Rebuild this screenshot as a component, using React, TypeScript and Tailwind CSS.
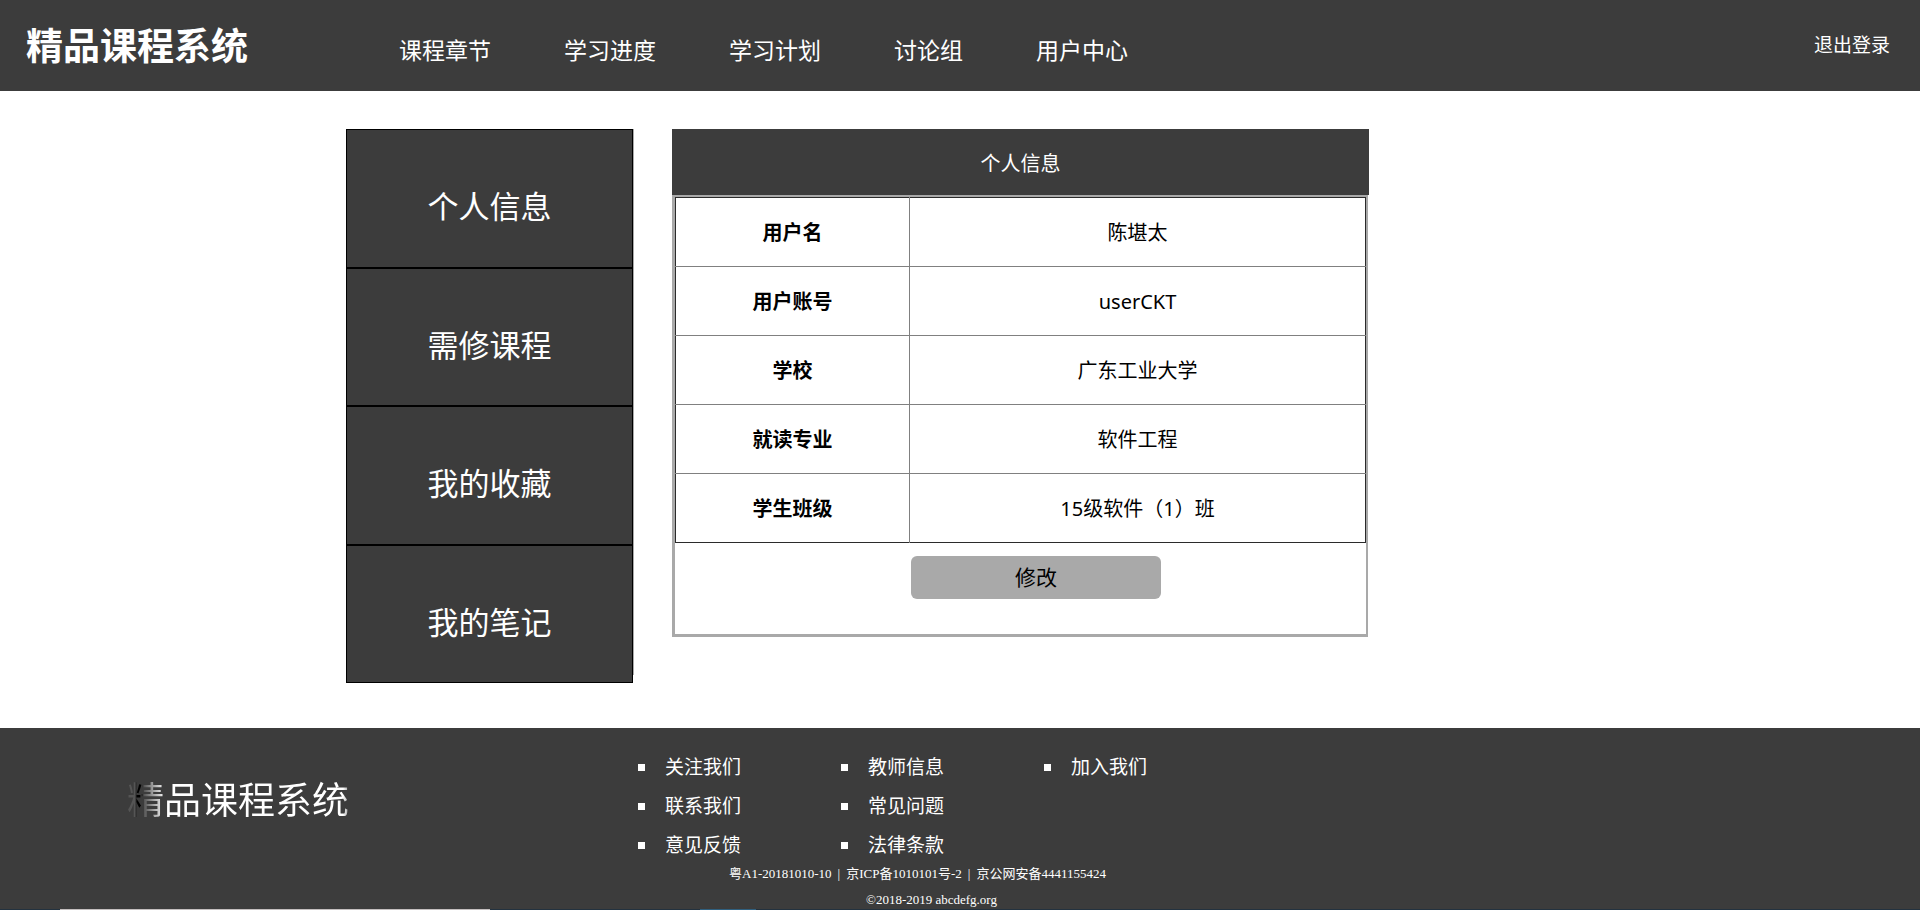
const navItems = ["课程章节", "学习进度", "学习计划", "讨论组", "用户中心"];

const sideItems = ["个人信息", "需修课程", "我的收藏", "我的笔记"];

const profile = [
  { label: "用户名", value: "陈堪太" },
  { label: "用户账号", value: "userCKT" },
  { label: "学校", value: "广东工业大学" },
  { label: "就读专业", value: "软件工程" },
  { label: "学生班级", value: "15级软件（1）班" },
];

const footerColumns = [
  ["关注我们", "联系我们", "意见反馈"],
  ["教师信息", "常见问题", "法律条款"],
  ["加入我们"],
];

function Header() {
  return (
    <header className="flex h-[91px] items-center bg-[#3c3c3c] pr-[30px] pl-[26px] text-white">
      <a href="#" className="w-[373px] shrink-0 text-[37px] leading-[91px] font-bold">
        精品课程系统
      </a>
      <nav className="flex gap-[73px] pt-[10px] text-[23px] whitespace-nowrap">
        {navItems.map((item) => (
          <a key={item} href="#">
            {item}
          </a>
        ))}
      </nav>
      <a href="#" className="ml-auto text-[19px] whitespace-nowrap">
        退出登录
      </a>
    </header>
  );
}

function Sidebar() {
  return (
    <aside className="h-[546px] w-[288px] shrink-0 border-r border-[#a9a9a9]">
      <nav className="flex h-[554px] flex-col bg-[#3c3c3c]">
        {sideItems.map((item) => (
          <a
            key={item}
            href="#"
            className="flex flex-1 items-center justify-center border border-black pt-4 text-[31px] text-white"
          >
            {item}
          </a>
        ))}
      </nav>
    </aside>
  );
}

function ProfilePanel() {
  return (
    <section className="w-[697px]">
      <h1 className="h-[66px] bg-[#3c3c3c] text-center text-[20px] leading-[70px] text-white">
        个人信息
      </h1>
      <div className="mr-px border-t-2 border-r-2 border-b-[3px] border-l-[3px] border-[#a9a9a9] pb-[35px]">
        <table className="w-full table-fixed border-collapse border border-[#2b2b2b] text-[20px] text-black">
          <colgroup>
            <col className="w-[234px]" />
            <col />
          </colgroup>
          <tbody>
            {profile.map((row) => (
              <tr key={row.label} className="h-[69px] not-last:border-b not-last:border-[#808080]">
                <th scope="row" className="border-r border-r-[#808080] pt-0.5 text-center font-bold">
                  {row.label}
                </th>
                <td className="pt-0.5 text-center">{row.value}</td>
              </tr>
            ))}
          </tbody>
        </table>
        <button
          type="button"
          className="mt-[13px] ml-[236px] block h-[43px] w-[250px] rounded-md bg-[#a9a9a9] text-[21px] text-black"
        >
          修改
        </button>
      </div>
    </section>
  );
}

function Footer() {
  return (
    <footer className="mt-[53px] bg-[#3c3c3c] text-white">
      <div className="flex h-[181px] pl-[127px]">
        <div className="w-[511px] shrink-0 pt-11">
          <span className="inline-block bg-[linear-gradient(90deg,#555_0px,#555_8px,#000_10px,#000_14px,#555_17px,#fff_38px,#fff_216px,#999_222px)] bg-clip-text text-[37px] text-transparent">
            精品课程系统
          </span>
        </div>
        <div className="pt-5">
          <div className="grid grid-cols-[203px_203px_203px] text-[19px] leading-[39px]">
            {footerColumns.map((column) => (
              <ul key={column[0]}>
                {column.map((item) => (
                  <li key={item} className="flex items-center gap-5">
                    <span className="size-[7px] bg-white" />
                    <a href="#">{item}</a>
                  </li>
                ))}
              </ul>
            ))}
          </div>
          <div className="-mt-1 mr-[50px] text-center font-['Liberation_Serif','Noto_Sans_CJK_SC',serif] text-[13px] leading-[26px]">
            <p className="flex justify-center gap-1.5">
              <span>粤A1-20181010-10</span>
              <span>|</span>
              <span>京ICP备1010101号-2</span>
              <span>|</span>
              <span>京公网安备4441155424</span>
            </p>
            <p className="pl-7">©2018-2019 abcdefg.org</p>
          </div>
        </div>
      </div>
      <div className="flex h-px bg-[#23323f]">
        <div className="ml-[60px] w-[430px] bg-[#c4bfbf]" />
        <div className="ml-[210px] w-[56px] bg-[#2f6080]" />
      </div>
    </footer>
  );
}

export default function App() {
  return (
    <div className="bg-white font-['Noto_Sans','Noto_Sans_CJK_SC',sans-serif]">
      <Header />
      <main className="flex items-start gap-[38px] pt-[38px] pl-[346px]">
        <Sidebar />
        <ProfilePanel />
      </main>
      <Footer />
    </div>
  );
}
